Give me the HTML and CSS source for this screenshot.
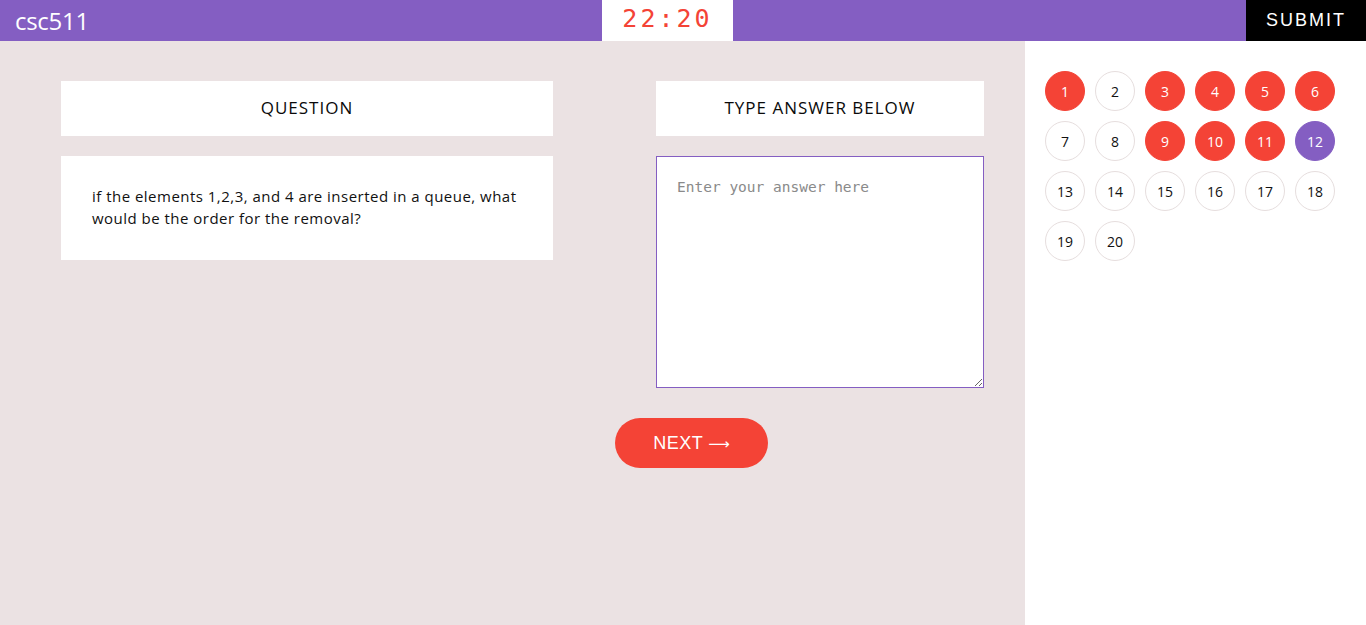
FILE: index.html
```html
<!DOCTYPE html>
<html>
<head>
<meta charset="utf-8">
<link rel="stylesheet" href="styles.css">
</head>
<body>
<header class="topbar">
  <div class="logo">csc511</div>
  <div class="timer">22:20</div>
  <button class="submit">SUBMIT</button>
</header>
<div class="page">
  <main class="main">
    <div class="columns">
      <section class="qcol">
        <div class="card head">QUESTION</div>
        <div class="card qtext">if the elements 1,2,3, and 4 are inserted in a queue, what would be the order for the removal?</div>
      </section>
      <section class="acol">
        <div class="card head">TYPE ANSWER BELOW</div>
        <textarea class="answer" placeholder="Enter your answer here"></textarea>
      </section>
    </div>
    <div class="actions">
      <button class="next">NEXT <span class="arrow">⟶</span></button>
    </div>
  </main>
  <aside class="side">
    <div class="grid">
      <span class="dot done">1</span>
      <span class="dot">2</span>
      <span class="dot done">3</span>
      <span class="dot done">4</span>
      <span class="dot done">5</span>
      <span class="dot done">6</span>
      <span class="dot">7</span>
      <span class="dot">8</span>
      <span class="dot done">9</span>
      <span class="dot done">10</span>
      <span class="dot done">11</span>
      <span class="dot current">12</span>
      <span class="dot">13</span>
      <span class="dot">14</span>
      <span class="dot">15</span>
      <span class="dot">16</span>
      <span class="dot">17</span>
      <span class="dot">18</span>
      <span class="dot">19</span>
      <span class="dot">20</span>
    </div>
  </aside>
</div>
</body>
</html>
```
FILE: styles.css
```css
* { box-sizing: border-box; }
html, body { margin: 0; padding: 0; }
body {
  font-family: "Open Sans", "DejaVu Sans", sans-serif;
  color: #111;
  background: #fff;
  height: 625px;
  overflow: hidden;
}
.topbar {
  height: 41px;
  background: #845ec2;
  display: flex;
  align-items: stretch;
}
.logo {
  width: 602px;
  color: #fff;
  font-size: 24px;
  letter-spacing: -0.3px;
  padding-left: 15px;
  line-height: 41px;
}
.timer {
  width: 131px;
  background: #fff;
  color: #f44336;
  font-family: "DejaVu Sans Mono", monospace;
  font-size: 25px;
  letter-spacing: 3px;
  text-align: center;
  line-height: 38px;
}
.submit {
  margin-left: auto;
  width: 120px;
  border: 0;
  background: #000;
  color: #fff;
  font-family: "Liberation Sans", Arial, sans-serif;
  font-size: 18px;
  letter-spacing: 2px;
  padding: 0;
}
.page {
  display: flex;
  height: 584px;
}
.main {
  width: 1025px;
  background: #ebe2e3;
  padding-top: 40px;
}
.columns {
  display: flex;
  padding-left: 61px;
  gap: 103px;
}
.qcol { width: 492px; display: flex; flex-direction: column; gap: 20px; }
.acol { width: 328px; display: flex; flex-direction: column; gap: 20px; }
.card { background: #fff; }
.head {
  height: 55px;
  line-height: 54px;
  text-align: center;
  font-size: 17px;
  letter-spacing: 1px;
  color: #0a0a0a;
}
.qtext {
  height: 104px;
  padding: 29px 31px;
  font-size: 15px;
  letter-spacing: 0.48px;
  line-height: 22px;
}
.answer {
  display: block;
  width: 328px;
  height: 232px;
  border: 1px solid #845ec2;
  padding: 22px 20px;
  font-family: "DejaVu Sans Mono", monospace;
  font-size: 14.5px;
  resize: vertical;
  outline: none;
  margin: 0;
}
.answer::placeholder { color: #8a8a8a; }
.actions {
  padding-left: 615px;
  padding-top: 30px;
}
.next {
  width: 153px;
  height: 50px;
  border: 0;
  border-radius: 25px;
  background: #f44336;
  color: #fff;
  font-family: "Liberation Sans", Arial, sans-serif;
  font-size: 18px;
  letter-spacing: 0.5px;
  padding: 0;
}
.arrow {
  font-family: "DejaVu Sans", sans-serif;
  font-size: 15px;
  letter-spacing: 0;
}
.side {
  flex: 1;
  background: #fff;
  padding: 30px 20px;
}
.grid {
  display: grid;
  grid-template-columns: repeat(6, 40px);
  gap: 10px;
}
.dot {
  width: 40px;
  height: 40px;
  border-radius: 50%;
  border: 1px solid #e6dede;
  display: flex;
  align-items: center;
  justify-content: center;
  font-size: 14px;
  color: #111;
}
.dot.done { background: #f44336; border-color: #f44336; color: #fff; }
.dot.current { background: #845ec2; border-color: #845ec2; color: #fff; }
```
